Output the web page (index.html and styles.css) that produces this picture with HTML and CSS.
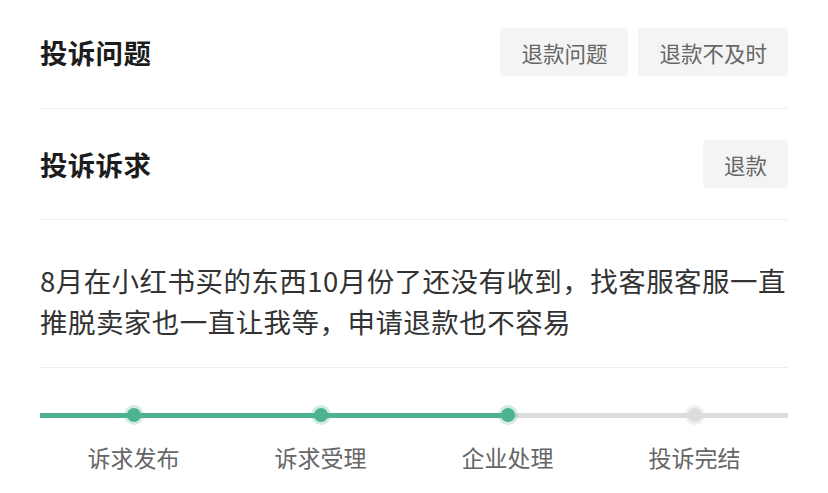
FILE: index.html
```html
<!DOCTYPE html>
<html lang="zh-CN">
<head>
<meta charset="utf-8">
<title>投诉详情</title>
<link rel="stylesheet" href="styles.css">
</head>
<body>
<main class="detail">
  <section class="row row-first">
    <h2 class="row-title">投诉问题</h2>
    <div class="tags">
      <span class="tag">退款问题</span>
      <span class="tag">退款不及时</span>
    </div>
  </section>
  <section class="row">
    <h2 class="row-title">投诉诉求</h2>
    <div class="tags">
      <span class="tag">退款</span>
    </div>
  </section>
  <section class="desc">
    <p>8月在小红书买的东西10月份了还没有收到，找客服客服一直推脱卖家也一直让我等，申请退款也不容易</p>
  </section>
  <ol class="steps">
    <li class="step done">
      <div class="track"><span class="dot"></span></div>
      <span class="label">诉求发布</span>
    </li>
    <li class="step done">
      <div class="track"><span class="dot"></span></div>
      <span class="label">诉求受理</span>
    </li>
    <li class="step current">
      <div class="track"><span class="dot"></span></div>
      <span class="label">企业处理</span>
    </li>
    <li class="step">
      <div class="track"><span class="dot"></span></div>
      <span class="label">投诉完结</span>
    </li>
  </ol>
</main>
</body>
</html>
```
FILE: styles.css
```css
* {
  box-sizing: border-box;
}

html, body {
  margin: 0;
  padding: 0;
  background: #fff;
}

body {
  font-family: "Noto Sans CJK SC", "Noto Sans", sans-serif;
  color: #333;
}

.detail {
  padding: 0 40px;
}

.row {
  display: flex;
  align-items: center;
  justify-content: space-between;
  padding: 31px 0;
  border-bottom: 1px solid #eeeeee;
}

.row-first {
  padding-top: 28px;
  padding-bottom: 32px;
}

.row-title {
  margin: 0;
  font-size: 27.5px;
  line-height: 46px;
  font-weight: 700;
  color: #1c1c1c;
  letter-spacing: 0.3px;
}

.tags {
  display: flex;
  gap: 10px;
}

.tag {
  display: flex;
  align-items: center;
  height: 48px;
  padding: 0 21px;
  background: #f4f4f4;
  border-radius: 4px;
  font-size: 21.5px;
  color: #666;
}

.desc {
  padding: 40px 0 25px;
  border-bottom: 1px solid #eeeeee;
}

.desc p {
  margin: 0;
  font-size: 27.5px;
  line-height: 41px;
  letter-spacing: 0.45px;
  color: #333;
}

.steps {
  list-style: none;
  margin: 0;
  padding: 36px 0 0;
  display: grid;
  grid-template-columns: repeat(4, 1fr);
}

.step {
  display: flex;
  flex-direction: column;
  align-items: center;
}

.track {
  width: 100%;
  height: 22px;
  display: flex;
  align-items: center;
  justify-content: center;
  background: linear-gradient(#dcdcdc, #dcdcdc) center / 100% 5px no-repeat;
}

.step.done .track {
  background: linear-gradient(#4db38e, #4db38e) center / 100% 5px no-repeat;
}

.step.current .track {
  background: linear-gradient(90deg, #4db38e 50%, #dcdcdc 50%) center / 100% 5px no-repeat;
}

.dot {
  width: 14px;
  height: 14px;
  border-radius: 50%;
  background: #dcdcdc;
  box-shadow: 0 0 0 3px rgba(220, 220, 220, 0.45);
}

.step.done .dot,
.step.current .dot {
  background: #4db38e;
  box-shadow: 0 0 0 3px rgba(77, 179, 142, 0.25);
}

.label {
  margin-top: 16px;
  font-size: 23px;
  line-height: 30px;
  color: #666;
}
```
